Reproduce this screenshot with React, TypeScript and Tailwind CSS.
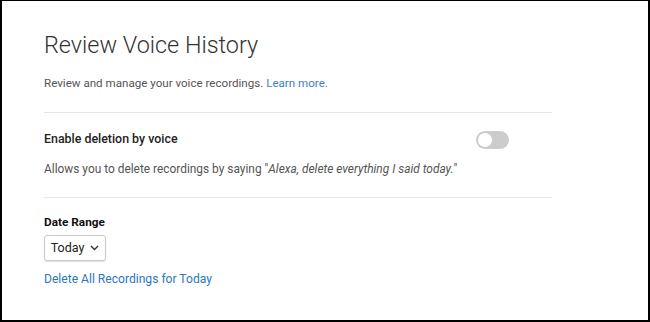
import React from 'react';

const font = { fontFamily: 'Roboto, "Open Sans", sans-serif' };

export default function App() {
  return (
    <div
      className="w-[650px] h-[322px] bg-white border-2 border-t border-black text-[#333]"
      style={font}
    >
      <div className="w-[508px] ml-[42px] pt-[26px]">
        <h1 className="text-[23.4px] font-light leading-[36px] text-[#333]">Review Voice History</h1>
        <p className="mt-[11px] text-[11.6px] leading-[18px] text-[#555]">
          Review and manage your voice recordings.{' '}
          <a className="text-[#3b82c4]">Learn more.</a>
        </p>
        <div className="mt-[20px] h-px bg-[#e7e7e7]" />
        <div className="mt-[16px] flex items-center justify-between">
          <span className="text-[12.4px] font-medium leading-[20px] text-[#232323]">Enable deletion by voice</span>
          <div className="mr-[43px] mt-[1px] w-[33px] h-[18px] rounded-full bg-[#cccccc] flex items-center px-[2px]">
            <div className="w-[14px] h-[14px] rounded-full bg-white" />
          </div>
        </div>
        <p className="mt-[11px] text-[11.9px] leading-[18px] text-[#555]">
          Allows you to delete recordings by saying "<i>Alexa, delete everything I said today.</i>"
        </p>
        <div className="mt-[19px] h-px bg-[#e7e7e7]" />
        <div className="mt-[16px] text-[11.8px] font-bold leading-[16px] text-[#111]">Date Range</div>
        <div className="mt-[5px] w-[62px] h-[26px] border border-[#c8c8c8] rounded-[3px] shadow-[0_1px_1px_rgba(0,0,0,0.12)] flex items-center justify-center gap-[6px] text-[12.5px] text-[#222]">
          <span>Today</span>
          <svg width="9" height="6" viewBox="0 0 9 6" fill="none" stroke="#333" strokeWidth="1.4">
            <path d="M1 1l3.5 3.5L8 1" />
          </svg>
        </div>
        <a className="block mt-[8px] text-[12.1px] leading-[20px] text-[#2a78c0]">Delete All Recordings for Today</a>
      </div>
    </div>
  );
}
